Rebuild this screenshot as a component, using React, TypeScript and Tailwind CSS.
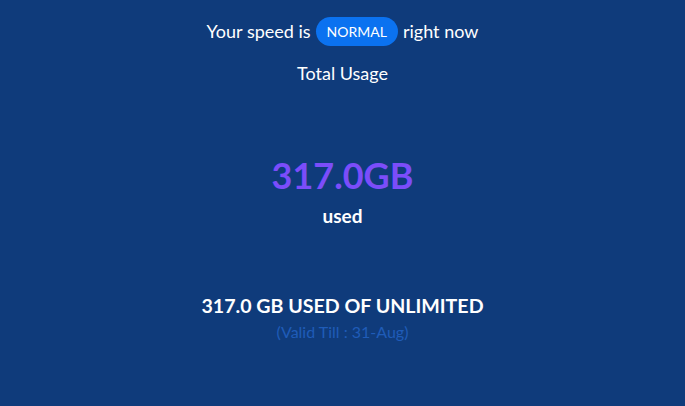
export default function App() {
  return (
    <div className="w-[685px] h-[406px] bg-[#0f3b7b] text-white flex flex-col items-center" style={{ fontFamily: "Lato, 'Noto Sans', sans-serif" }}>
      <div className="mt-[17px] flex items-center gap-[5px] text-[18px] leading-[29px]">
        <span>Your speed is</span>
        <span className="h-[29px] px-[11px] rounded-full bg-[#0b72f0] text-[14px] leading-[29px]">NORMAL</span>
        <span>right now</span>
      </div>
      <div className="mt-[15px] text-[18px] leading-[24px]">Total Usage</div>
      <div className="mt-[68px] text-[36px] font-bold leading-[44px] text-[#7b4dfa]">317.0GB</div>
      <div className="mt-[6px] text-[19px] font-bold leading-[26px]">used</div>
      <div className="mt-[64px] text-[19.6px] font-bold leading-[26px]">317.0 GB USED OF UNLIMITED</div>
      <div className="mt-[3px] text-[16px] leading-[20px] text-[#1f5cb8]">(Valid Till : 31-Aug)</div>
    </div>
  );
}
